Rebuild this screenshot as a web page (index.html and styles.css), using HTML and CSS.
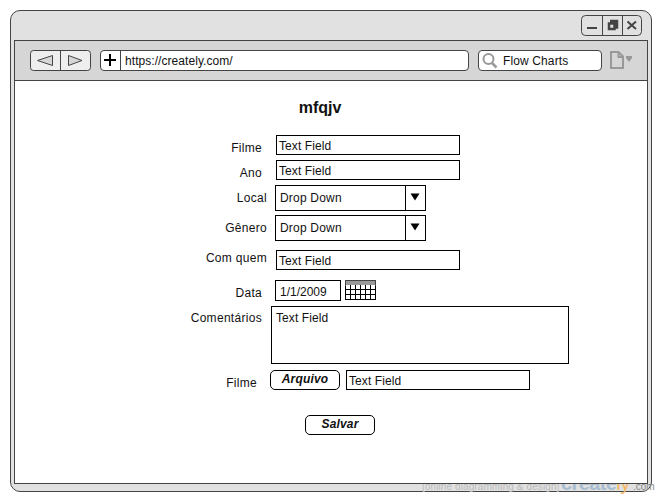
FILE: index.html
```html
<!DOCTYPE html>
<html lang="pt">
<head>
<meta charset="utf-8">
<title>mfqjv</title>
<link rel="stylesheet" href="styles.css">
</head>
<body>
<div class="window">
  <div class="titlebar">
    <div class="controls">
      <svg width="62" height="22" viewBox="0 0 62 22">
        <rect x=".5" y=".5" width="60" height="20" rx="4" fill="#e1e1e1" stroke="#444"/>
        <path d="M21.5 1v19M41.5 1v19" stroke="#444"/>
        <path d="M6 13h10" stroke="#444" stroke-width="2"/>
        <path d="M29 6h7v6.500h-2M28 8.500h5.500v5.500h-5.500z" fill="none" stroke="#444" stroke-width="2.500"/>
        <path d="M46.500 6.500l8.500 7.500M55 6.500l-8.500 7.500" stroke="#444" stroke-width="2"/>
      </svg>
    </div>
  </div>
  <div class="viewport">
    <div class="toolbar">
      <svg class="nav" width="61" height="21" viewBox="0 0 61 21">
        <rect x=".5" y=".5" width="60" height="20" rx="3" fill="#eee" stroke="#444"/>
        <path d="M30.500 1v19" stroke="#444"/>
        <path d="M7.500 10.500l15-5v10zM52 10.500l-13.500-5v10z" fill="#d6d6d6" stroke="#444"/>
      </svg>
      <div class="address">
        <span class="plus"><svg width="12" height="12"><path d="M0 6h12M6 0v12" stroke="#000" stroke-width="2"/></svg></span>
        <span class="url">https://creately.com/</span>
      </div>
      <div class="search">
        <svg width="16" height="16" viewBox="0 0 16 16"><circle cx="6.500" cy="6" r="5" fill="none" stroke="#999" stroke-width="2"/><path d="M9.500 9.500l5 5" stroke="#999" stroke-width="2.500"/></svg>
        <span>Flow Charts</span>
      </div>
      <svg class="page-icon" width="23" height="18" viewBox="0 0 23 18"><path d="M1 1h7.500l4.500 4.500v11.500h-12zM8.500 1v5h4.500" fill="none" stroke="#999" stroke-width="2"/><path d="M16 5h6v2l-3 4-3-4z" fill="#999"/></svg>
    </div>
    <div class="content">
      <h1>mfqjv</h1>
      <div class="row"><label class="mid low">Filme</label><div class="field">Text Field</div></div>
      <div class="row"><label class="mid low">Ano</label><div class="field">Text Field</div></div>
      <div class="row drop-row"><label class="far">Local</label><div class="drop"><span>Drop Down</span><i><svg width="10" height="8"><path d="M.5 .5h9l-4.500 7z"/></svg></i></div></div>
      <div class="row drop-row"><label class="far">Gênero</label><div class="drop"><span>Drop Down</span><i><svg width="10" height="8"><path d="M.5 .5h9l-4.500 7z"/></svg></i></div></div>
      <div class="row quem-row"><label class="far quem">Com quem</label><div class="field">Text Field</div></div>
      <div class="row date-row"><label class="mid date-label">Data</label><div class="date">1/1/2009</div>
        <svg width="31" height="20" viewBox="0 0 31 20"><path d="M.5 0v20M5.500 5v15M10.500 5v15M15.500 5v15M20.500 5v15M25.500 5v15M30.500 0v20M0 9.500h31M0 14.500h31M0 19.500h31" stroke="#000"/><path fill="#999" d="M0 0h31v5H0z"/><path d="M0 .5h31M.5 0v6M30.500 0v6" stroke="#444"/></svg>
      </div>
      <div class="row comment-row"><label class="mid comment-label">Comentários</label><div class="area">Text Field</div></div>
      <div class="row file-row"><label class="near low">Filme</label><div class="button">Arquivo</div><div class="field">Text Field</div></div>
      <div class="button save">Salvar</div>
    </div>
  </div>
  <div class="watermark"><span class="tag">[online diagramming &amp; design]</span><span class="brand">create<b>ly</b></span><span class="com">.com</span></div>
</div>
</body>
</html>
```
FILE: styles.css
```css
* { box-sizing: border-box; }
body {
  margin: 0;
  padding: 10px;
  width: 660px;
  height: 500px;
  overflow: hidden;
  background: #fff;
  color: #111;
  font: 12px/14px "Liberation Sans", Arial, sans-serif;
}
svg { display: block; flex: none; }
.window {
  position: relative;
  width: 642px;
  height: 482px;
  border: 1px solid #444;
  border-radius: 10px;
  background: #e1e1e1;
  padding: 0 3px;
}
.titlebar { height: 29px; display: flex; justify-content: flex-end; padding: 4px 5px 0 0; }
.viewport {
  position: relative;
  z-index: 1;
  height: 444px;
  border: 1px solid #444;
  background: #fff;
}
.toolbar {
  height: 40px;
  display: flex;
  align-items: flex-start;
  padding: 9px 0 0 15px;
  background: #d6d6d6;
  border-bottom: 1px solid #444;
}
.address, .search {
  display: flex;
  height: 21px;
  background: #fff;
  border: 1px solid #444;
  border-radius: 4px;
}
.address { width: 369px; margin-left: 9px; }
.plus { width: 20px; border-right: 1px solid #444; padding: 3px 0 0 3px; }
.url { padding: 3px 0 0 4px; letter-spacing: .06px; }
.search { width: 124px; margin-left: 9px; padding: 2px 0 0 3px; }
.search span { margin: 1px 0 0 5px; letter-spacing: .12px; }
.page-icon { margin: 1px 0 0 8px; }
.content { padding-top: 18px; }
h1 {
  width: 610px;
  height: 36px;
  margin: 0;
  font-size: 16px;
  line-height: 18px;
  text-align: center;
}
.row { display: flex; align-items: flex-start; height: 25px; }
label { text-align: right; letter-spacing: .3px; flex: none; }
.mid { width: 247px; margin-right: 14px; }
.far { width: 252px; margin-right: 8px; padding-top: 6px; }
.near { width: 242px; margin-right: 13px; }
.low { padding-top: 6px; }
.field {
  width: 184px;
  height: 20px;
  border: 1px solid #000;
  padding: 3px 2px 0;
}
.field, .area { letter-spacing: .08px; }
.drop-row { height: 30px; }
.drop { display: flex; width: 151px; height: 26px; border: 1px solid #000; letter-spacing: .2px; }
.drop span { width: 129px; padding: 5px 0 0 4px; }
.drop i { width: 20px; border-left: 1px solid #000; padding: 7px 0 0 4px; }
.quem-row { margin-top: 5px; height: 30px; }
.far.quem { padding-top: 1px; margin-right: 9px; }
.mid.date-label { padding-top: 6px; margin-right: 13px; }
.date-row { height: 26px; }
.date { width: 66px; height: 21px; border: 1px solid #000; padding: 4px 0 0 4px; margin-right: 4px; }
.mid.comment-label { padding-top: 5px; margin-right: 9px; }
.comment-row { height: 64px; }
.area { width: 298px; height: 58px; border: 1px solid #000; padding: 4px; }
.button {
  width: 70px;
  height: 20px;
  border: 1px solid #000;
  border-radius: 5px;
  text-align: center;
  font-weight: bold;
  font-style: italic;
  padding-top: 1px;
  letter-spacing: .15px;
}
.file-row .field { margin-left: 6px; }
.save { margin: 20px 0 0 290px; }
.watermark {
  position: absolute;
  left: 411px;
  top: 460px;
  width: 240px;
  height: 24px;
  display: flex;
  align-items: baseline;
  white-space: nowrap;
  line-height: 24px;
}
.tag { width: 139px; font-size: 10px; letter-spacing: .1px; color: #bbb; }
.brand { width: 72px; font-size: 20px; letter-spacing: -.6px; font-weight: bold; color: #a9bdd0; }
.brand b { color: #f3b765; font-weight: normal; }
.com { font-size: 10px; color: #888; }
```
